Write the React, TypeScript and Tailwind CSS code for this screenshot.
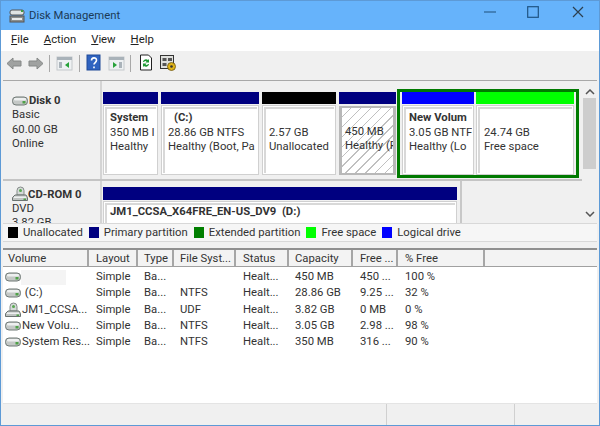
import type { ReactNode } from 'react';

function DiskIcon({ className = '' }: { className?: string }) {
  return (
    <svg viewBox="0 0 16 10" className={`h-[10px] w-[16px] shrink-0 ${className}`}>
      <rect x="0.5" y="1" width="15" height="8" rx="3.500" fill="#c4c8c6" stroke="#6f7875" />
      <rect x="2" y="2" width="12" height="2.500" rx="1.200" fill="#eef0f0" />
      <rect x="10.500" y="5" width="3" height="2.500" fill="#4fa148" />
    </svg>
  );
}

function CdIcon() {
  return (
    <svg viewBox="0 0 16 16" className="h-[16px] w-[16px] shrink-0">
      <path d="M5 9V4.500a3.500 3.500 0 0 1 7 0V9z" fill="#d5dad8" stroke="#858c89" />
      <circle cx="8.500" cy="4.500" r="1.500" fill="#58a851" />
      <path d="M3 9h11l1.500 2.500v3H.5v-3z" fill="#c0c4c2" stroke="#6b7370" />
      <rect x="2" y="10.500" width="12" height="1.500" fill="#eef0f0" />
      <rect x="11.500" y="12.500" width="2.500" height="1.500" fill="#4fa148" />
    </svg>
  );
}

function Tool({ children }: { children: ReactNode }) {
  return <svg viewBox="0 0 18 18" className="h-[18px] w-[18px] shrink-0">{children}</svg>;
}

function Sep({ className }: { className: string }) {
  return <div className={`h-[17px] w-px shrink-0 bg-[#a8a8a8] ${className}`} />;
}

function Panel({ arrow }: { arrow: 'left' | 'right' }) {
  return (
    <Tool>
      <rect x="1" y="3" width="15" height="13" fill="#eef1f3" stroke="#c4c8cb" />
      <rect x="1" y="3" width="15" height="3" fill="#a9b2b9" />
      <rect x={arrow === 'left' ? 3 : 11} y="8" width="3" height="6" fill="#aab3ba" />
      <path d={arrow === 'left' ? 'M13 8v6l-4-3z' : 'M5 8v6l4-3z'} fill="#27a23b" />
    </Tool>
  );
}

function Toolbar() {
  return (
    <div className="flex h-[24px] shrink-0 items-center pl-[5px]">
      <svg viewBox="0 0 16 13" className="h-[13px] w-[16px] shrink-0">
        <path d="M1 6.500L7 1v3h8v5H7v3z" fill="#a0a2a1" stroke="#858887" />
      </svg>
      <svg viewBox="0 0 16 13" className="ml-[6px] h-[13px] w-[16px] shrink-0">
        <path d="M15 6.500L9 1v3H1v5h8v3z" fill="#a0a2a1" stroke="#858887" />
      </svg>
      <Sep className="ml-[5px] mr-[6px]" />
      <Panel arrow="left" />
      <Sep className="ml-[5px] mr-[5px]" />
      <div className="flex gap-[5px]">
        <Tool>
          <rect x="2" y="1" width="13" height="15" fill="#2f63c0" stroke="#204b98" />
          <path
            d="M6.500 6.500C6.500 3 11.500 3 11.500 6.300c0 2.200-2.500 2.200-2.500 4.200M9 12.500v1.800"
            fill="none"
            stroke="#fff"
            strokeWidth="1.600"
          />
        </Tool>
        <Panel arrow="right" />
      </div>
      <Sep className="ml-[4px] mr-[6px]" />
      <div className="flex gap-[4px]">
        <Tool>
          <path d="M3.500 1h8l3 3v12h-11z" fill="#fff" stroke="#222" />
          <path d="M6 8a3 3 0 0 1 5-2l1-1v3.500H8.500l1-1A1.800 1.800 0 0 0 7 8z" fill="#1f9a35" />
          <path d="M12 10a3 3 0 0 1-5 2l-1 1V9.500h3.500l-1 1a1.800 1.800 0 0 0 2.500-.5z" fill="#1f9a35" />
        </Tool>
        <Tool>
          <rect x="1.500" y="1.500" width="13" height="13" fill="#dfe0dd" stroke="#333" />
          <rect x="3.500" y="4" width="4" height="3" fill="#555" />
          <rect x="9" y="4" width="4" height="3" fill="#555" />
          <rect x="3.500" y="9" width="4" height="3" fill="#555" />
          <circle cx="12.500" cy="12.500" r="4" fill="#e0b418" stroke="#6b5410" strokeWidth="0.8" />
          <circle cx="12.500" cy="12.500" r="1.300" fill="#333" />
        </Tool>
      </div>
    </div>
  );
}

function Partition({
  bar,
  width,
  hatched,
  children,
}: {
  bar: string;
  width: string;
  hatched?: boolean;
  children: ReactNode;
}) {
  return (
    <div className={`flex h-[83px] shrink-0 flex-col ${width}`}>
      <div className={`h-[12px] shrink-0 ${bar}`} />
      {hatched ? (
        <div className="mt-[2px] min-h-0 flex-1 bg-[#b8b8b8] px-[3px] py-[2px]">
          <div className="h-full overflow-hidden whitespace-nowrap bg-[repeating-linear-gradient(135deg,#ffffff_0px,#ffffff_6px,#c0c0c0_6px,#c0c0c0_7px)] pl-[3px] pt-[2px] leading-[14.500px]">
            {children}
          </div>
        </div>
      ) : (
        <div className="mt-[1px] min-h-0 flex-1 border border-[#d0d0d0] bg-white p-px">
          <div className="h-full overflow-hidden whitespace-nowrap border-l-2 border-t-2 border-[#d8d8d8] pl-[3px] pt-[2px] leading-[14.500px]">
            {children}
          </div>
        </div>
      )}
    </div>
  );
}

function Legend({ color, label }: { color: string; label: string }) {
  return (
    <div className="flex items-center gap-[5px]">
      <div className={`h-[11px] w-[10px] ${color}`} />
      <span className="pt-px">{label}</span>
    </div>
  );
}

function DiskPane() {
  return (
    <div className="flex h-[143px] shrink-0 border-t border-[#a8a8a8] bg-[#f0f0f0] text-[#333]">
      <div className="flex min-w-0 flex-1 flex-col overflow-hidden">
        <div className="flex h-[100px] shrink-0 border-b-2 border-[#c4c4c4]">
          <div className="w-[99px] shrink-0 border-r-2 border-[#d4d4d4] pl-[9px] pt-[13px] leading-[14.300px]">
            <div className="flex items-center font-bold">
              <DiskIcon className="mr-px" />
              <span>Disk 0</span>
            </div>
            <div>Basic</div>
            <div>60.00 GB</div>
            <div>Online</div>
          </div>
          <div className="flex items-start gap-[3px] pl-[1px] pt-[11px]">
            <Partition bar="bg-[#000080]" width="w-[55px]">
              <div className="font-bold">System</div>
              <div>350 MB I</div>
              <div>Healthy</div>
            </Partition>
            <Partition bar="bg-[#000080]" width="w-[98px]">
              <div className="pl-[6px] font-bold">(C:)</div>
              <div>28.86 GB NTFS</div>
              <div>Healthy (Boot, Pa</div>
            </Partition>
            <Partition bar="bg-black" width="w-[74px]">
              <div>&nbsp;</div>
              <div>2.57 GB</div>
              <div>Unallocated</div>
            </Partition>
            <Partition bar="bg-[#000080]" width="w-[57px]" hatched>
              <div>&nbsp;</div>
              <div>450 MB</div>
              <div>Healthy (R</div>
            </Partition>
            <div className="-ml-[2px] -mt-[3px] flex h-[89px] w-[182px] shrink-0 gap-[2px] border-[3px] border-[#007a00] bg-[#f0f0f0] pl-[2px]">
              <Partition bar="bg-[#0000ff]" width="w-[72px]">
                <div className="font-bold">New Volum</div>
                <div>3.05 GB NTF</div>
                <div>Healthy (Lo</div>
              </Partition>
              <Partition bar="bg-[#00ff00]" width="w-[98px]">
                <div>&nbsp;</div>
                <div className="pl-[1px]">24.74 GB</div>
                <div className="pl-[1px]">Free space</div>
              </Partition>
            </div>
          </div>
        </div>
        <div className="flex min-h-0 flex-1 overflow-hidden">
          <div className="w-[99px] shrink-0 border-r-2 border-[#d4d4d4] pl-[9px] pt-[5px] leading-[14.300px]">
            <div className="flex items-end font-bold">
              <CdIcon />
              <span>CD-ROM 0</span>
            </div>
            <div>DVD</div>
            <div>3.82 GB</div>
          </div>
          <div className="w-[360px] shrink-0 border-r-2 border-[#c8c8c8] pl-[1px] pr-[3px] pt-[6px]">
            <div className="h-[13px] bg-[#000080]" />
            <div className="mt-[1px] h-[30px] border border-[#d0d0d0] bg-white p-px">
              <div className="h-full whitespace-nowrap border-l-2 border-t-2 border-[#d8d8d8] pl-[3px] font-bold leading-[14.500px]">
                JM1_CCSA_X64FRE_EN-US_DV9&nbsp;&nbsp;(D:)
              </div>
            </div>
          </div>
        </div>
      </div>
      <div className="flex w-[15px] shrink-0 flex-col items-center">
        <svg viewBox="0 0 10 6" className="mt-[8px] h-[6px] w-[10px] shrink-0">
          <path d="M1 5l4-4 4 4" fill="none" stroke="#555" strokeWidth="1.500" />
        </svg>
        <div className="mt-[3px] h-[71px] w-[13px] shrink-0 bg-[#cdcdcd]" />
        <div className="flex-1" />
        <svg viewBox="0 0 10 6" className="mb-[6px] h-[6px] w-[10px] shrink-0">
          <path d="M1 1l4 4 4-4" fill="none" stroke="#555" strokeWidth="1.500" />
        </svg>
      </div>
    </div>
  );
}

const columns = [
  { label: 'Volume', width: 'w-[86px]', pad: 'pl-[5px]' },
  { label: 'Layout', width: 'w-[49px]', pad: 'pl-[7px]' },
  { label: 'Type', width: 'w-[36px]', pad: 'pl-[6px]' },
  { label: 'File Syst...', width: 'w-[62px]', pad: 'pl-[6px]' },
  { label: 'Status', width: 'w-[53px]', pad: 'pl-[7px]' },
  { label: 'Capacity', width: 'w-[64px]', pad: 'pl-[6px]' },
  { label: 'Free ...', width: 'w-[45px]', pad: 'pl-[7px]' },
  { label: '% Free', width: 'w-[87px]', pad: 'pl-[7px]' },
];

const rows = [
  { name: '', cd: false, fs: '', cap: '450 MB', free: '450 ...', pct: '100 %' },
  { name: ' (C:)', cd: false, fs: 'NTFS', cap: '28.86 GB', free: '9.25 ...', pct: '32 %' },
  { name: 'JM1_CCSA...', cd: true, fs: 'UDF', cap: '3.82 GB', free: '0 MB', pct: '0 %' },
  { name: 'New Volu...', cd: false, fs: 'NTFS', cap: '3.05 GB', free: '2.98 ...', pct: '98 %' },
  { name: 'System Res...', cd: false, fs: 'NTFS', cap: '350 MB', free: '316 ...', pct: '90 %' },
];

function VolumeList() {
  return (
    <div className="min-h-0 flex-1 overflow-hidden border-t-2 border-[#8f8f8f] bg-white text-[#333]">
      <div className="flex h-[17px] items-center border-b border-[#a0a0a0] bg-[#f3f3f3]">
        {columns.map((c) => (
          <div key={c.label} className={`h-full shrink-0 whitespace-nowrap border-r-2 border-[#a6a6a6] leading-[17px] ${c.width} ${c.pad}`}>
            {c.label}
          </div>
        ))}
      </div>
      <div className="pt-[2px]">
        {rows.map((r) => (
          <div key={r.name} className="flex h-[16.300px] items-center whitespace-nowrap leading-[16px]">
            <div className="flex w-[86px] shrink-0 items-center gap-[1px] pl-[2px]">
              {r.cd ? <CdIcon /> : <DiskIcon />}
              {r.name ? <span className="whitespace-pre">{r.name}</span> : <div className="-ml-px h-[15px] w-[45px] bg-[#f4f4f4]" />}
            </div>
            <div className="w-[49px] shrink-0 pl-[7px]">Simple</div>
            <div className="w-[36px] shrink-0 pl-[6px]">Ba...</div>
            <div className="w-[62px] shrink-0 pl-[6px]">{r.fs}</div>
            <div className="w-[53px] shrink-0 pl-[7px]">Healt...</div>
            <div className="w-[64px] shrink-0 pl-[6px]">{r.cap}</div>
            <div className="w-[45px] shrink-0 pl-[7px]">{r.free}</div>
            <div className="pl-[7px]">{r.pct}</div>
          </div>
        ))}
      </div>
    </div>
  );
}

export default function App() {
  return (
    <div className="flex h-[426px] w-[600px] flex-col overflow-hidden border border-[#5d9ad6] bg-[#f0f0f0] font-['Roboto',sans-serif] text-[11.300px]">
      <div className="flex h-[29px] shrink-0 items-center bg-[#66b3fb] pl-[8px]">
        <svg viewBox="0 0 16 16" className="h-[16px] w-[16px] shrink-0">
          <rect x="1" y="2" width="14" height="5" rx="2" fill="#dfe3e3" stroke="#555" />
          <rect x="1" y="8" width="14" height="6" fill="#8b8f8f" stroke="#555" />
          <rect x="3" y="10" width="10" height="2" fill="#e8eaea" />
          <rect x="12" y="2" width="2" height="2" fill="#3f9c44" />
        </svg>
        <span className="ml-[4px] pt-px text-[#1c3a57]">Disk Management</span>
        <div className="ml-auto flex items-center self-start pr-[15px] pt-[5px]">
          <svg viewBox="0 0 12 12" className="h-[12px] w-[12px] text-[#2a5f8f]">
            <path d="M0 6h12" stroke="currentColor" strokeWidth="1.200" />
          </svg>
          <svg viewBox="0 0 12 12" className="ml-[31px] h-[12px] w-[12px] text-[#1f5483]">
            <rect x="0.700" y="0.700" width="10.600" height="10.600" fill="none" stroke="currentColor" strokeWidth="1.200" />
          </svg>
          <svg viewBox="0 0 12 12" className="ml-[33px] h-[12px] w-[12px] text-[#2c3f50]">
            <path d="M1 1l10 10M11 1L1 11" stroke="currentColor" strokeWidth="1.200" />
          </svg>
        </div>
      </div>
      <div className="flex h-[21px] shrink-0 items-center gap-[15px] bg-white pl-[10px] text-[#222]">
        <span><u>F</u>ile</span>
        <span><u>A</u>ction</span>
        <span><u>V</u>iew</span>
        <span><u>H</u>elp</span>
      </div>
      <Toolbar />
      <div className="mx-[2px] mt-[5px] flex min-h-0 flex-1 flex-col">
        <DiskPane />
        <div className="flex h-[19px] shrink-0 items-center gap-[6px] border-y border-[#d8d8d8] bg-[#f6f6f6] pl-[5px] text-[#333]">
          <Legend color="bg-black" label="Unallocated" />
          <Legend color="bg-[#000080]" label="Primary partition" />
          <Legend color="bg-[#007f00]" label="Extended partition" />
          <Legend color="bg-[#00ff00]" label="Free space" />
          <Legend color="bg-[#0000ff]" label="Logical drive" />
        </div>
        <div className="h-[6px] shrink-0 bg-[#f0f0f0]" />
        <VolumeList />
        <div className="flex h-[22px] shrink-0 border-t border-[#e4e4e4] bg-[#f0f0f0]">
          <div className="w-[384px] border-r border-[#d0d0d0]" />
          <div className="w-[128px] border-r border-[#d0d0d0]" />
        </div>
      </div>
    </div>
  );
}
